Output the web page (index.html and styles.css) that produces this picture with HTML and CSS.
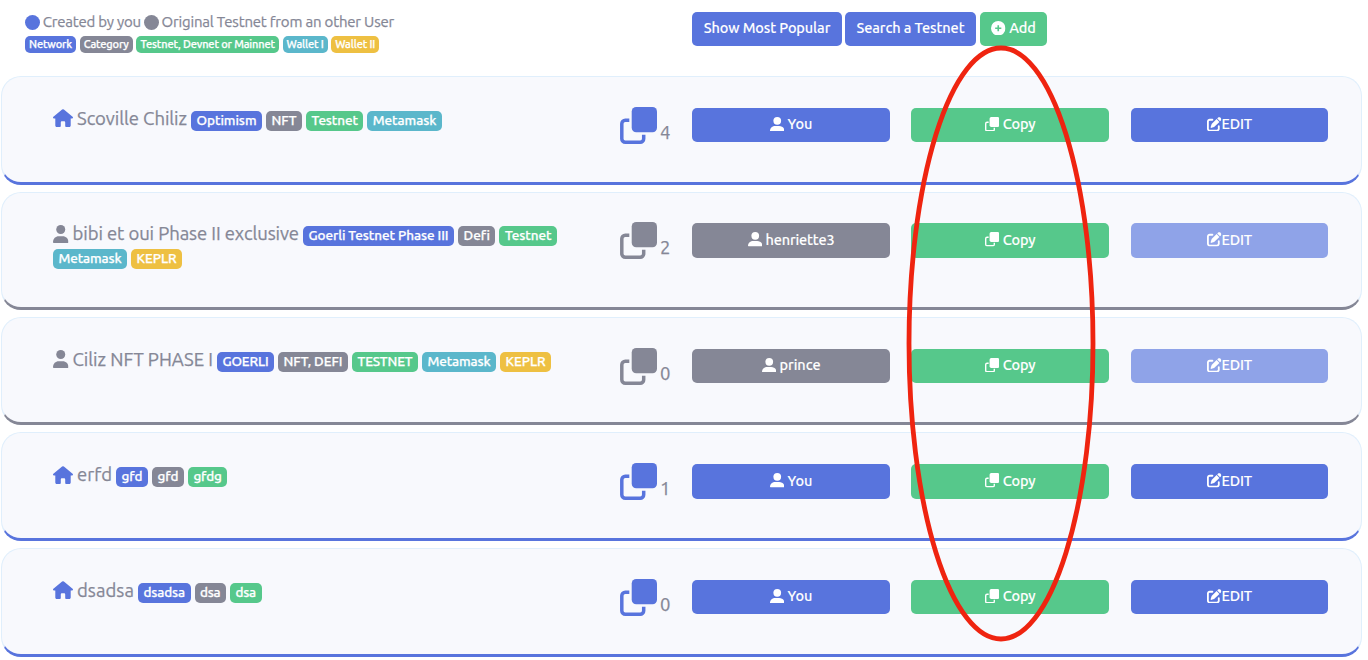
FILE: index.html
```html
<!DOCTYPE html>
<html lang="en">
<head>
<meta charset="utf-8">
<title>Testnets</title>
<link rel="stylesheet" href="styles.css">
<script src="app.js" defer></script>
</head>
<body>
<svg class="defs" aria-hidden="true">
  <symbol id="house" viewBox="0 0 20 18"><path d="M9.1.6a1.3 1.3 0 0 1 1.8 0L19.600 7.800c.8.700.4 1.700-.5 1.700H17.700V16.500c0 .8-.6 1.500-1.400 1.500H13.400c-.8 0-1.200-.6-1.200-1.300V13.600c0-.8-.5-1.300-1.200-1.300H9c-.7 0-1.200.5-1.200 1.300v3.100c0 .7-.4 1.300-1.200 1.300H3.700c-.8 0-1.400-.7-1.400-1.500V9.500H.900c-.9 0-1.300-1-.5-1.700z"/></symbol>
  <symbol id="person" viewBox="0 0 15 15"><circle cx="7.500" cy="4" r="4"/><path d="M0 14.300C0 11.200 2.600 9.300 5.500 9.300h4c2.900 0 5.500 1.900 5.500 5 0 .5-.3.700-.8.700H.8c-.5 0-.8-.2-.8-.7z"/></symbol>
  <symbol id="user" viewBox="0 0 15.500 18"><circle cx="7.750" cy="4.500" r="4.500"/><path d="M0 17.200C0 13.400 2.700 11.200 5.700 11.200h4.100c3 0 5.700 2.200 5.700 6 0 .5-.3.800-.8.800H.8c-.5 0-.8-.3-.8-.8z"/></symbol>
  <symbol id="clone" viewBox="0 0 37 37"><rect x="11.700" y="0" width="25.300" height="25.300" rx="4.500"/><path d="M9.300 13.300H5.300a3.500 3.500 0 0 0-3.500 3.500v14.900a3.500 3.500 0 0 0 3.500 3.500h14.900a3.500 3.500 0 0 0 3.500-3.500V27.700" fill="none" stroke="currentColor" stroke-width="3.500"/></symbol>
  <symbol id="plus" viewBox="0 0 16 16"><path fill-rule="evenodd" d="M8 0a8 8 0 1 1 0 16A8 8 0 0 1 8 0zM7.100 4.600v2.500H4.600v1.800h2.500v2.500h1.800V8.900h2.500V7.100H8.900V4.600z"/></symbol>
  <symbol id="edit" viewBox="0 0 512 512"><path d="M471.600 21.700c-21.900-21.900-57.300-21.900-79.200 0L362.300 51.700l97.900 97.900 30.100-30.100c21.900-21.900 21.900-57.300 0-79.200L471.600 21.700zm-299.200 220c-6.100 6.100-10.800 13.600-13.500 21.900l-29.600 88.800c-2.900 8.600-.6 18.100 5.800 24.600s15.900 8.700 24.600 5.800l88.800-29.600c8.200-2.700 15.700-7.400 21.900-13.500L437.700 172.300 339.700 74.300 172.400 241.700zM96 64C43 64 0 107 0 160V416c0 53 43 96 96 96H352c53 0 96-43 96-96V320c0-17.700-14.300-32-32-32s-32 14.300-32 32v96c0 17.700-14.300 32-32 32H96c-17.700 0-32-14.300-32-32V160c0-17.700 14.300-32 32-32h96c17.700 0 32-14.300 32-32s-14.300-32-32-32H96z"/></symbol>
</svg>
<header class="topbar">
  <div class="legend">
    <div class="legend-owner"><i class="dot blue"></i><span data-w="98">Created by you</span><i class="dot gray"></i><span data-w="232.500">Original Testnet from an other User</span></div>
    <div class="legend-tags"><b class="tag blue" data-w="43">Network</b><b class="tag gray" data-w="45">Category</b><b class="tag green" data-w="134.500">Testnet, Devnet or Mainnet</b><b class="tag cyan" data-w="37">Wallet I</b><b class="tag yellow" data-w="40">Wallet II</b></div>
  </div>
  <div class="actions">
    <button class="btn blue popular"><span data-w="126.500">Show Most Popular</span></button>
    <button class="btn blue search"><span data-w="108">Search a Testnet</span></button>
    <button class="btn green add"><svg><use href="#plus"/></svg><span data-w="26.500">Add</span></button>
  </div>
</header>
<main class="list" id="list"></main>
<svg class="ring" viewBox="0 0 190 597"><ellipse cx="95" cy="298.500" rx="92" ry="295.500"/></svg>
</body>
</html>
```
FILE: app.js
```js
// Each text carries its intended advance width; fitText spreads letters to reach it.
const testnets = [
  { name: ['Scoville Chiliz', 110], own: true, count: 4, owner: ['You', 25],
    tags: [['blue', 'Optimism', 60], ['gray', 'NFT', 25], ['green', 'Testnet', 46.300], ['cyan', 'Metamask', 63.500]] },
  { name: ['bibi et oui Phase II exclusive', 226.500], own: false, count: 2, owner: ['henriette3', 69],
    tags: [['blue', 'Goerli Testnet Phase III', 140], ['gray', 'Defi', 26], ['green', 'Testnet', 46.500], ['cyan', 'Metamask', 63], ['yellow', 'KEPLR', 40]] },
  { name: ['Ciliz NFT PHASE I', 140.500], own: false, count: 0, owner: ['prince', 41],
    tags: [['blue', 'GOERLI', 46], ['gray', 'NFT, DEFI', 59], ['green', 'TESTNET', 55], ['cyan', 'Metamask', 63], ['yellow', 'KEPLR', 40]] },
  { name: ['erfd', 35], own: true, count: 1, owner: ['You', 25],
    tags: [['blue', 'gfd', 21], ['gray', 'gfd', 21], ['green', 'gfdg', 28]] },
  { name: ['dsadsa', 57], own: true, count: 0, owner: ['You', 25],
    tags: [['blue', 'dsadsa', 41.500], ['gray', 'dsa', 20.500], ['green', 'dsa', 20.500]] }
];

const icon = (id, cls = '') => `<svg class="${cls}"><use href="#${id}"/></svg>`;

document.getElementById('list').innerHTML = testnets.map(t => `
  <article class="card ${t.own ? 'own' : 'other'}">
    <div class="name">${icon(t.own ? 'house' : 'user', t.own ? 'house' : 'user')}<span class="title" data-w="${t.name[1]}">${t.name[0]}</span>${t.tags.map(g => `<b class="tag ${g[0]}" data-w="${g[2]}">${g[1]}</b>`).join('')}</div>
    <div class="copies">${icon('clone')}<span>${t.count}</span></div>
    <button class="btn ${t.own ? 'blue' : 'gray'}">${icon('person')}<span data-w="${t.owner[1]}">${t.owner[0]}</span></button>
    <button class="btn green">${icon('clone')}<span data-w="32.500">Copy</span></button>
    <button class="btn blue edit" ${t.own ? '' : 'disabled'}>${icon('edit')}<span data-w="30.500">EDIT</span></button>
  </article>`).join('');

function fitText(el) {
  const range = document.createRange();
  range.selectNodeContents(el);
  const natural = range.getBoundingClientRect().width;
  el.style.letterSpacing = (Number(el.dataset.w) - natural) / el.textContent.length + 'px';
}
document.querySelectorAll('[data-w]').forEach(fitText);
```
FILE: styles.css
```css
* { box-sizing: border-box; }
body { margin: 0; height: 660px; overflow: hidden; position: relative; background: #fff; color: #858796; font-family: Ubuntu, "Noto Sans", sans-serif; font-size: 15px; -webkit-text-stroke: .25px currentColor; }
svg { fill: currentColor; flex: none; }
.defs { position: absolute; width: 0; height: 0; }
.blue { background: #5874dd; }
.gray { background: #858796; }
.green { background: #56c88b; }
.cyan { background: #5bb7cb; }
.yellow { background: #eec042; }
.topbar { display: flex; height: 76px; padding: 12px 0 0 25px; }
.legend { width: 667px; }
.legend-owner { display: flex; align-items: center; height: 20px; line-height: 20px; white-space: nowrap; }
.legend-owner span { margin: 0 3px 0 2.800px; }
.dot { width: 15px; height: 15px; border-radius: 50%; flex: none; }
.legend-tags { display: flex; gap: 3.700px; margin-top: 4px; }
.legend-tags .tag { height: 17px; line-height: 16px; font-size: 11px; padding: 0 4px; }
.tag { color: #fff; font-weight: 500; font-size: 13.500px; line-height: 19px; height: 20px; padding: 0 5.500px; border-radius: 5px; white-space: nowrap; }
.actions { display: flex; gap: 4px; }
.btn { display: flex; align-items: center; justify-content: center; gap: 3.500px; border: 0; border-radius: 5px; height: 34.300px; padding: 0 0 2px; color: #fff; font: 500 14.500px/20px Ubuntu, "Noto Sans", sans-serif; -webkit-text-stroke-width: .1px; white-space: nowrap; }
.btn svg { width: 14.500px; height: 14.500px; }
.popular { width: 150px; }
.search { width: 131px; margin-left: -1px; }
.add { width: 67px; }
.list { display: grid; gap: 7px; padding-left: 1px; width: 1362px; }
.card { display: grid; grid-template-columns: 567px 72px 198px 198px 197px; column-gap: 0; align-items: start; height: 108.600px; padding: 31.100px 0 0 51px; border: 1px solid #e0effc; border-bottom: 3px solid #5874dd; border-radius: 20px; background: #f8f9fd; }
.card:nth-child(2) { height: 118.200px; padding-top: 30.800px; }
.card.other { border-bottom-color: #858796; }
.card .btn + .btn { margin-left: 21px; width: 198px; }
.card .btn.edit { margin-left: 43px; width: 197px; }
.btn.edit { gap: 0; }
.btn:disabled { background: #8fa3e8; }
.name { display: flex; flex-wrap: wrap; align-items: flex-start; gap: 3px 4px; width: 515px; padding-top: 3px; }
.name .house { width: 20px; height: 18px; margin-top: -1.700px; color: #5874dd; }
.name .user { width: 15.500px; height: 18px; margin-top: -1.700px; }
.title { font-size: 18.500px; line-height: 20px; margin-top: -3px; white-space: nowrap; }
.copies { display: flex; align-items: flex-start; gap: 3px; }
.copies svg { width: 37px; height: 37px; margin-top: -1.200px; color: #858796; }
.own .copies svg { color: #5874dd; }
.copies span { font-size: 18.500px; line-height: 22px; margin-top: 13px; }
.ring { position: absolute; left: 906.200px; top: 44.500px; width: 190px; height: 597px; }
.ring ellipse { fill: none; stroke: #ef2410; stroke-width: 4.800; }
```
